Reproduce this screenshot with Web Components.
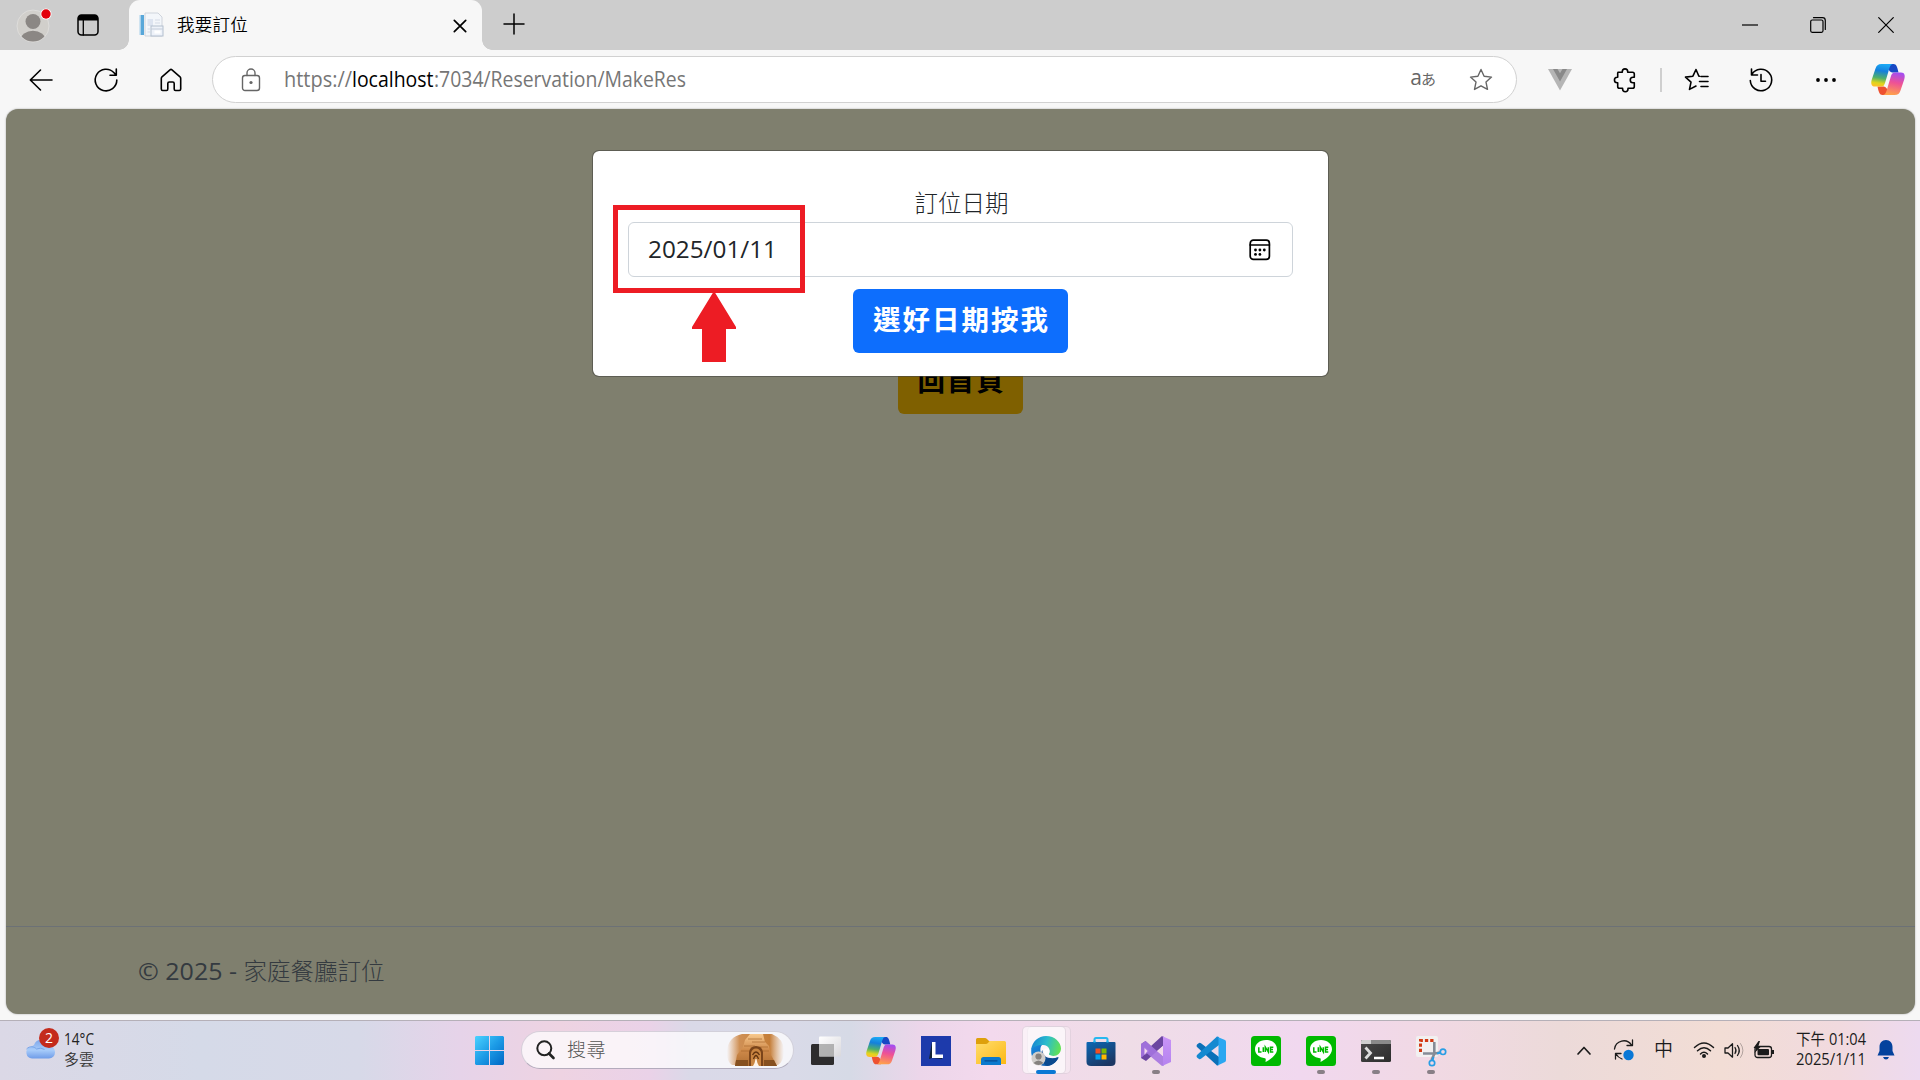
<!DOCTYPE html>
<html lang="zh-Hant">
<head>
<meta charset="utf-8">
<title>我要訂位</title>
<style>
html,body{margin:0;height:100%;overflow:hidden;background:#f7f7f7}
body{font-family:"Open Sans","Noto Sans CJK TC",sans-serif;color:#000}
</style>
</head>
<body>
<desktop-screen></desktop-screen>
<script>
const S = 'fill="none" stroke="currentColor" stroke-linecap="round" stroke-linejoin="round"';
const COPILOT = `<defs><linearGradient id="a" x1=".5" y1="0" x2=".35" y2="1"><stop offset="0" stop-color="#1ba9f5"/><stop offset=".3" stop-color="#1480dc"/><stop offset=".62" stop-color="#4fb06a"/><stop offset=".85" stop-color="#e0d51c"/><stop offset="1" stop-color="#ffc02a"/></linearGradient>
<linearGradient id="b" x1=".6" y1="0" x2=".4" y2="1"><stop offset="0" stop-color="#a44df0"/><stop offset=".45" stop-color="#ee5196"/><stop offset="1" stop-color="#ffa24a"/></linearGradient></defs>
<path fill="#1748c4" d="M17 0H22.5C25.5 0 26.3 3 27.5 8.5H22C19 8.5 18 6 17 5Z"/>
<path fill="#ee5130" d="M17 31H11.5C8.5 31 7.7 28 6.5 22.5H12C15 22.5 16 25 17 26Z"/>
<path fill="url(#a)" d="M10.500 0H22C19.300 0 18.400 4 17.300 8L14 19C13 22 12 22.600 9.500 22.600H4C0 22.600-.3 19 .8 15.500L4.500 4.500C5.500 1.500 7 0 10.500 0Z"/>
<path fill="url(#b)" d="M23.500 31H12C14.700 31 15.600 27 16.700 23L20 12C21 9 22 8.400 24.500 8.400H30C34 8.400 34.300 12 33.200 15.500L29.500 26.500C28.500 29.500 27 31 23.500 31Z"/>`;
const LINE = `<rect width="30" height="30" rx="3.500" fill="#00b900"/><path fill="#fff" d="M15 4C8.500 4 4 8 4 13.200C4 18 8 21.500 14 22.200C15 22.400 14.800 23.500 14.500 26C19 23.500 26 19 26 13.200C26 8 21.500 4 15 4Z"/><path d="M7.800 11.200V16H10.500M12.300 11.200V16M14.300 16V11.200L17.300 16V11.200M22.300 11.200H19.500V16H22.300M19.500 13.600H22" fill="none" stroke="#00b900" stroke-width="1.500"/>`;
const STAR = 'M12 1.500L15.100 8.200L22.500 9.100L17 14.100L18.500 21.400L12 17.800L5.500 21.400L7 14.100L1.500 9.100L8.900 8.200Z';
const ICONS = {
avatar:[36,36,`<circle cx="18" cy="19" r="16" fill="#d1cfcb" stroke="#dedddb"/><clipPath id="c"><circle cx="18" cy="19" r="15.500"/></clipPath><g fill="#8b8784" clip-path="url(#c)"><circle cx="18" cy="14.500" r="7.500"/><ellipse cx="18" cy="33" rx="12.500" ry="9.300"/></g><circle cx="31" cy="7" r="5.500" fill="#fff"/><circle cx="31" cy="7" r="4.700" fill="#e3000b"/>`],
workspace:[22,22,`<rect x="1" y="1" width="20" height="20" rx="3.500" ${S} stroke-width="1.500"/><path d="M1 6.500V4.500A3.500 3.500 0 0 1 4.500 1H17.500A3.500 3.500 0 0 1 21 4.500V6.500Z"/><path d="M6.300 6V21" ${S} stroke-width="1.300"/>`],
favicon:[26,26,`<path d="M7 1H20L24 5V24H7Z" fill="#f3f6fa" stroke="#cfd4dc"/><rect x="2" y="3" width="4" height="20" fill="#58a7d9"/><rect x="1.500" y="3" width="1.500" height="20" fill="#a9d1ec"/><path d="M9.500 7H15V14H9.500Z" fill="#dde4f0"/><path d="M17 8H22M17 11H22M9.500 17H12M9.500 20H12" stroke="#d5dbe6"/><rect x="13" y="14" width="12" height="10" fill="#eef2f9" stroke="#b3bfce"/><path d="M13 17H25" stroke="#c3ccd9"/><rect x="16.500" y="18.500" width="6" height="3" fill="#fff"/>`],
x:[14,14,`<path d="M1.300 1.300L12.700 12.700M12.700 1.300L1.300 12.700" ${S} stroke-width="1.700"/>`],
winx:[16,16,`<path d="M.7 .7L15.300 15.300M15.300 .7L.7 15.300" ${S} stroke-width="1.200"/>`],
plus:[22,22,`<path d="M11 1V21M1 11H21" ${S} stroke-width="1.500"/>`],
min:[16,2,`<path d="M0 1H16" stroke="#000" stroke-width="1.200"/>`],
restore:[16,16,`<rect x=".7" y="3" width="12.300" height="12.300" rx="1.500" ${S} stroke-width="1.200"/><path d="M3.500 .7H12.500A2.800 2.800 0 0 1 15.300 3.500V12.500" ${S} stroke-width="1.200"/>`],
back:[24,22,`<path d="M23 11H1.500M11.500 1L1.300 11L11.500 21" ${S} stroke-width="1.600"/>`],
reload:[24,24,`<path d="M22.800 12A10.800 10.800 0 1 1 20 4.800L22 7M22.300 1V7.200H16" ${S} stroke-width="1.600"/>`],
home:[22,24,`<path d="M1.300 10.500Q1.300 9.500 2 8.800L10 1.800Q11 1 12 1.800L20 8.800Q20.700 9.500 20.700 10.500V21Q20.700 22.500 19.300 22.500H15.500Q14.200 22.500 14.200 21V15.500Q14.200 14 12.700 14H9.300Q7.800 14 7.800 15.500V21Q7.800 22.500 6.500 22.500H2.700Q1.300 22.500 1.300 21Z" ${S} stroke-width="1.600"/>`],
lock:[20,24,`<g color="#666"><rect x="1.500" y="7.500" width="17" height="15" rx="2.500" ${S} stroke-width="1.400"/><path d="M6 7.500V5A4 4 0 0 1 14 5V7.500" ${S} stroke-width="1.400"/><circle cx="10" cy="14.500" r="1.600" fill="#666"/></g>`],
star:[24,24,`<path color="#666" d="${STAR}" ${S} stroke-width="1.400"/>`],
vue:[24,22,`<path d="M0 0H24L12 21.500Z" fill="#b5b5b5"/><path d="M5 0H9.500L12 4.300L14.500 0H19L12 12.500Z" fill="#898989"/>`],
puzzle:[22,24,`<path d="M4 4.200H8.300V3.600A2.700 2.700 0 0 1 13.700 3.600V4.200H18.500Q20.300 4.200 20.300 6V9.300H19A2.700 2.700 0 0 0 19 14.800H20.300V18.500Q20.300 20.300 18.500 20.300H14V21A2.700 2.700 0 0 1 8.600 21V20.300H5.500Q3.700 20.300 3.700 18.500V14.800H3.200A2.700 2.700 0 0 1 3.200 9.300H3.700V5Q3.700 4.200 4.500 4.200Z" ${S} stroke-width="1.600"/>`],
favs:[26,24,`<path d="M15.500 8.200L14.900 8.200L12 1.500L8.900 8.200L1.500 9.100L7 14.100L5.500 21.400L12 18M17 8.500H24M15.500 13.500H24M17 18.500H24" ${S} stroke-width="1.600"/>`],
history:[24,24,`<path d="M2.500 1V7H8.500M2.800 6.500A10.700 10.700 0 1 1 1.300 12.500M12 6.500V13.300H16.500" ${S} stroke-width="1.600"/>`],
dots:[22,6,`<circle cx="3" cy="3" r="1.900"/><circle cx="11" cy="3" r="1.900"/><circle cx="19" cy="3" r="1.900"/>`],
copilot:[34,31,COPILOT],
copilotSmall:[30,27.4,COPILOT,'0 0 34 31'],
calendar:[22,22,`<rect x="1.200" y="1.200" width="19.200" height="19.200" rx="3.200" ${S} stroke-width="1.700"/><path d="M1 6H20.500" ${S} stroke-width="1.500"/><g><circle cx="6.500" cy="11" r="1.400"/><circle cx="10.900" cy="11" r="1.400"/><circle cx="15.300" cy="11" r="1.400"/><circle cx="6.500" cy="15.400" r="1.400"/><circle cx="10.900" cy="15.400" r="1.400"/></g>`],
arrow:[44,71,`<path fill="#ed1c24" d="M22 0L44 36V38H34V71H10V38H0V36Z"/>`],
cloud:[30,20,`<defs><linearGradient id="a" x1="0" y1="0" x2="0" y2="1"><stop offset="0" stop-color="#7da6ea"/><stop offset=".55" stop-color="#a8ccfa"/><stop offset="1" stop-color="#6f9ce8"/></linearGradient></defs><path fill="url(#a)" d="M7 19.500A6 6 0 0 1 5 8C7 7 8 7 9 6C11 -1 21 -1 23 6C27 7 30 9 30 13.500A6 6 0 0 1 24 19.500Z"/><path d="M1.500 10C5 6.500 9 7.500 11.500 10Q16 8 19.500 10.500" stroke="#78a4e8" fill="none"/>`],
win:[29,29,`<defs><linearGradient id="a" gradientUnits="userSpaceOnUse" x1="0" y1="0" x2="29" y2="29"><stop offset="0" stop-color="#4bd2ff"/><stop offset=".5" stop-color="#1c9be6"/><stop offset="1" stop-color="#0067c5"/></linearGradient></defs><path fill="url(#a)" d="M1 0H14V14H0V1ZM15 0H28L29 1V14H15ZM0 15H14V29H1L0 28ZM15 15H29V28L28 29H15Z"/>`],
search:[19,20,`<circle cx="8.300" cy="8.300" r="7" fill="none" stroke="#222" stroke-width="2"/><path d="M13 13.500L17.500 18" stroke="#222" stroke-width="2.600" stroke-linecap="round"/>`],
canyon:[60,34,`<defs><linearGradient id="a"><stop offset="0" stop-color="#d9975a" stop-opacity="0"/><stop offset=".22" stop-color="#cf9055"/><stop offset=".75" stop-color="#c47d38"/><stop offset="1" stop-color="#dba067" stop-opacity="0"/></linearGradient><linearGradient id="b" x1="0" y1="0" x2="0" y2="1"><stop offset="0" stop-color="#f8c98e"/><stop offset=".5" stop-color="#cf8a4a"/><stop offset="1" stop-color="#b06f33"/></linearGradient></defs><path fill="url(#a)" d="M16 1H46Q58 6 58 18Q58 28 52 32H6Q0 28 1 18Q2 4 16 1Z"/><path fill="url(#b)" d="M24 1H37L39 9L43 13L45 22L51 33H36Q36 26 33 24Q28 21 25 33H9L11 22L17 14L19 7Z"/><path d="M22 6H36M26 9H39M18 13H29M33 14H42M15 18H25M35 18H43" stroke="#a5652b" stroke-width="1" opacity=".65"/><path d="M10 27H22V33H9ZM38 27H48L51 33H38Z" fill="#86501f"/><path fill="#7a441a" d="M23 33V19Q24 13 30 13Q36 13 37 19V33Z"/><path fill="#c98541" d="M25 33V20Q26 15.500 30 15.500Q34 15.500 35 20V33Z"/><path d="M26.500 22Q30 16 33.500 22M27.500 26Q30 19 32.500 26" fill="none" stroke="#633510" stroke-width="1.300"/><path fill="#fff3e4" d="M27 33Q29 30 29.500 26H30.500Q31 30 33 33Z"/>`],
task:[30,29,`<defs><linearGradient id="a" x1="0" y1="0" x2="1" y2="1"><stop offset="0" stop-color="#fff"/><stop offset="1" stop-color="#d9d8dc"/></linearGradient></defs><rect y="8" width="23" height="21" rx="1.500" fill="#2d2c2d"/><rect x="8" y="0.500" width="22" height="20" rx="1" fill="url(#a)"/><path d="M8 8H23V20.500H8Z" fill="#a3a3a3" opacity=".8"/>`],
L:[30,30,`<rect width="30" height="30" fill="#1d3aab"/><path d="M11 6L8 23L11 22L21 23V20H14V6Z" fill="#123"/><path d="M11 6H14.500V18.500H22V22H11Z" fill="#fff"/>`],
folder:[30,28,`<defs><linearGradient id="a" x1="0" y1="0" x2="1" y2="1"><stop offset="0" stop-color="#ffdd6e"/><stop offset="1" stop-color="#fcb813"/></linearGradient></defs><path d="M0 2.500Q0 1 1.500 1H9Q10 1 11 2L13 4H28V10H0Z" fill="#dea00b"/><path d="M0 7H10Q11 7 12 6L13.500 4H28.500Q30 4 30 5.500V27H0Z" fill="url(#a)"/><path d="M5 28V22.500Q5 20 7.500 20H22.500Q25 20 25 22.500V28Z" fill="#0b79cd"/><path d="M9 23.800H21" stroke="#064c94" stroke-width="1.300" stroke-linecap="round"/>`],
edge:[30,30,`<defs><linearGradient id="a" x1="0" y1=".3" x2="1" y2=".5"><stop offset="0" stop-color="#1683d1"/><stop offset=".5" stop-color="#2bbccd"/><stop offset="1" stop-color="#62e254"/></linearGradient><linearGradient id="b" x1="0" y1="0" x2="1" y2="1"><stop offset="0" stop-color="#1a8be0"/><stop offset="1" stop-color="#0c4fa0"/></linearGradient></defs><path fill="url(#b)" d="M.2 14C1 9 7 7 11 9C8 12 9 20 15 22C20 24 24 22 27.500 21C25 27 20 30 15 30C6 30-.5 23 .2 14Z"/><path fill="#0b4a8f" d="M11.500 14C11 20 17 24 27.700 21.500C25 27 21 29.500 16 29.900C10 27 8 19 11.500 14Z"/><path fill="url(#a)" d="M.1 14C1 5.500 7.500 0 15 0C24 0 30 6.500 30 12.500C30 17 26.500 20 22.500 20C19.500 20 17.500 19 17.800 17.700C20 15 18 9 12 9C6.500 9 1.500 11 .1 14Z"/><path d="M12.500 14.500C14 11.500 18 12 18.500 14.500Q18.800 17 17.700 18Q18 19.500 22 20C18 22 13 20 12.500 14.500Z" fill="#fff"/><circle cx="7.500" cy="22.500" r="7" fill="#d1cecb"/><circle cx="7.500" cy="20.500" r="3.100" fill="#85817e"/><path d="M2.500 27Q7.500 22 12.500 27Q7.500 31 2.500 27Z" fill="#85817e"/>`],
store:[30,30,`<defs><linearGradient id="a" x1="0" y1="0" x2=".6" y2="1"><stop offset="0" stop-color="#0b68b5"/><stop offset="1" stop-color="#1c3763"/></linearGradient></defs><path d="M8.500 8V3.500Q8.500 2 10 2H20Q21.500 2 21.500 3.500V8" fill="none" stroke="#27b8ef" stroke-width="2"/><path d="M.5 7Q.5 6 1.500 6H28.500Q29.500 6 29.500 7V26Q29.500 30 25 30H5Q.5 30 .5 26Z" fill="url(#a)"/><path d="M8.500 6.500V5M21.500 6.500V5" stroke="#27b8ef" stroke-width="2"/><path fill="#f25022" d="M9.500 12.500H14.500V17.500H9.500Z"/><path fill="#7fba00" d="M15.500 12.500H20.500V17.500H15.500Z"/><path fill="#00a4ef" d="M9.500 18.500H14.500V23.500H9.500Z"/><path fill="#ffb900" d="M15.500 18.500H20.500V23.500H15.500Z"/>`],
vs:[30,30,`<defs><linearGradient id="a" x1="0" y1="0" x2="0" y2="1"><stop offset="0" stop-color="#c994f7"/><stop offset="1" stop-color="#b583ef"/></linearGradient></defs><path fill="#6b46a0" d="M0 8L4.500 5L10 10L21 0L23 1V9L5 25L0 22Z"/><path fill="#f2daeb" d="M3.500 11L8 15L3.500 19Z"/><path fill="#a574e0" d="M0 8L4.500 5L23 21V29.500L21 30L5.500 17L0 22Z" opacity=".9"/><path fill="#f2daeb" d="M3.500 12L6.500 15L3.500 18.500ZM22 10V20L16 15Z"/><path fill="url(#a)" d="M21 0L30 4V26L21 30Q22 29.500 22 28V2Q22 .5 21 0Z"/>`],
code:[30,30,`<path fill="#0b70b8" d="M1 8.500L3 7Q4 6.500 5 7.300L23 21V29L21 29.500L1 11Q0 10 1 8.500Z"/><path fill="#1589d1" d="M1 21.500L3 23Q4 23.500 5 22.700L23 9V1L21 .5L1 19Q0 20 1 21.500Z"/><path fill="#2aa7f1" d="M20.500 .5L29 4Q30 4.500 30 6V24Q30 25.500 29 26L20.500 30Q22.500 29 22.500 27V3Q22.500 1 20.500 .5Z"/>`],
line:[30,30,LINE],
term:[30,22,`<defs><linearGradient id="a" x1="0" y1="0" x2="1" y2="1"><stop offset="0" stop-color="#4a4a4a"/><stop offset="1" stop-color="#2c2c2c"/></linearGradient></defs><rect width="30" height="22" rx="1.500" fill="url(#a)"/><path d="M0 4V1.500Q0 0 1.500 0H28.500Q30 0 30 1.500V4Z" fill="#8a8a8a"/><path d="M0 4V1.500Q0 0 1.500 0H10V4Z" fill="#cfcfcf"/><path d="M4.500 7.500L9.500 13L4.500 18.500" fill="none" stroke="#ddd" stroke-width="2.800"/><path d="M13 18H23" stroke="#fff" stroke-width="2.500"/>`],
snip:[30,30,`<rect width="22" height="21" rx="2" fill="#f2f0f0"/><path d="M4.500 16V4.500H18" fill="none" stroke="#d33a13" stroke-width="3" stroke-dasharray="3.300 2"/><path d="M18.300 6V18L15.500 24M7 17.500H19L24 16.500" fill="none" stroke="#858c96" stroke-width="2.600"/><circle cx="27" cy="15.800" r="2.700" fill="none" stroke="#299ee5" stroke-width="1.700"/><circle cx="16" cy="27" r="2.700" fill="none" stroke="#299ee5" stroke-width="1.700"/><path d="M21 17.500L24.500 16.500M17.500 21L16.500 24.500" stroke="#299ee5" stroke-width="2"/>`],
chev:[14,9,`<path d="M1 8L7 1.500L13 8" ${S} stroke-width="1.700"/>`],
sync:[22,22,`<path d="M1.500 10A9.300 9.300 0 0 1 18.500 6M19.500 1V6.500H14M2.500 20V14.500H8M3 15Q5 18.500 9 20" ${S} stroke-width="1.300"/><circle cx="15.500" cy="16" r="5.200" fill="#0a78d6"/>`],
wifi:[22,16,`<path d="M1.500 5.500Q11-3.500 20.500 5.500M4.500 8.800Q11 2.600 17.500 8.800M7.500 12Q11 8.500 14.500 12" ${S} stroke-width="1.500"/><circle cx="11" cy="14" r="2"/>`],
volume:[20,17,`<path d="M1 6H4L8.500 1.800V15.200L4 11H1Z" ${S} stroke-width="1.300"/><path d="M11 5.500Q13 8.500 11 11.500M13.500 3.500Q17 8.500 13.500 13.500" ${S} stroke-width="1.300"/><path d="M16.500 1.500Q21.500 8.500 16.500 15.500" ${S} stroke-width="1" opacity=".3"/>`],
battery:[21,17,`<rect x="1" y="4.500" width="16.500" height="11" rx="2.500" ${S} stroke-width="1.300"/><rect x="3.500" y="7" width="11.500" height="6.300" rx="1"/><path d="M18 8H20V12H18Z"/><path d="M4.500 -1L-.5 6H2L.5 11L7 4.500H4.300L6 -1Z"/>`],
bell:[18,20,`<path fill="#04429d" d="M9 0C13 0 15.500 3 15.500 7V11L17.500 15.500H.5L2.500 11V7C2.500 3 5 0 9 0Z"/><path fill="#04429d" d="M6 17H12Q11 19.500 9 19.500Q7 19.500 6 17Z"/>`]
};

class Base extends HTMLElement{
  constructor(){super();this.attachShadow({mode:'open'});}
  connectedCallback(){this.shadowRoot.innerHTML=`<style>:host{display:block;box-sizing:border-box}*{box-sizing:border-box}${this.css()}</style>${this.html()}`;}
  css(){return '';}
  html(){return '<slot></slot>';}
}
customElements.define('ui-icon',class extends Base{
  css(){return ':host{display:block;flex:none}svg{display:block;overflow:visible}';}
  html(){const [w,h,body,vb]=ICONS[this.getAttribute('name')];return `<svg width="${w}" height="${h}" viewBox="${vb||`0 0 ${w} ${h}`}" fill="currentColor">${body}</svg>`;}
});
/* One line of text fitted to the width in "w": by letter spacing, or by condensing the glyphs when "squeeze" is set. */
customElements.define('fit-text',class extends Base{
  css(){return ':host{display:block;flex:none;white-space:pre;width:max-content}span{display:inline-block;transform-origin:0 50%}';}
  html(){return '<span><slot></slot></span>';}
  connectedCallback(){super.connectedCallback();
    const want=+this.getAttribute('w'),s=this.shadowRoot.querySelector('span'),n=[...this.textContent].length,natural=s.getBoundingClientRect().width;
    if(this.hasAttribute('squeeze')){s.style.transform=`scaleX(${want/natural})`;this.style.width=want+'px';}
    else s.style.letterSpacing=(want-natural)/n+'px';}
});
customElements.define('browser-tab',class extends Base{
  css(){return `:host{width:353px;height:50px;background:#f7f7f7;border-radius:11px 11px 0 0;display:flex;align-items:center;padding:0 15px 0 9px;position:relative;font-size:17.500px}
  :host::before,:host::after{content:"";position:absolute;bottom:0;width:10px;height:10px}
  :host::before{left:-10px;background:radial-gradient(circle at 0 0,transparent 9.500px,#f7f7f7 10px)}
  :host::after{right:-10px;background:radial-gradient(circle at 100% 0,transparent 9.500px,#f7f7f7 10px)}
  fit-text{margin-left:13px;flex:1;font-weight:350;margin-top:-4px}ui-icon[name=x]{margin-top:2px}`;}
  html(){return `<ui-icon name="favicon"></ui-icon><fit-text w="71">我要訂位</fit-text><ui-icon name="x"></ui-icon>`;}
});
customElements.define('tab-strip',class extends Base{
  css(){return `:host{height:50px;background:#cdcdcd;display:flex;align-items:center;padding:0 26px 0 15px}
  .ws{margin-left:26px}browser-tab{margin-left:30px}.plus{margin-left:21px;margin-top:-2px}.min{margin-left:auto}.r{margin-left:52px}.c{margin-left:52px}`;}
  html(){return `<ui-icon name="avatar"></ui-icon><ui-icon class="ws" name="workspace"></ui-icon><browser-tab></browser-tab><ui-icon class="plus" name="plus"></ui-icon><ui-icon class="min" name="min"></ui-icon><ui-icon class="r" name="restore"></ui-icon><ui-icon class="c" name="winx"></ui-icon>`;}
});
customElements.define('address-bar',class extends Base{
  css(){return `:host{width:1305px;height:47px;border:1.500px solid #d1d1d1;border-radius:24px;background:#fff;display:flex;align-items:center;padding:0 23px 0 28px;font-size:21px;color:#767676}
  .url{display:flex;margin:-1px 0 0 23px;flex:1}.tr{display:flex;align-items:baseline;margin:-6px 33px 0 0;color:#666}.tr small{font-size:15px;margin-left:-1px}`;}
  html(){return `<ui-icon name="lock"></ui-icon><div class="url"><fit-text squeeze w="68">https://</fit-text><fit-text squeeze w="81.500" style="color:#000">localhost</fit-text><fit-text squeeze w="252">:7034/Reservation/MakeRes</fit-text></div><div class="tr">a<small>あ</small></div><ui-icon name="star"></ui-icon>`;}
});
customElements.define('tool-bar',class extends Base{
  css(){return `:host{height:59px;display:flex;align-items:center;padding:0 15px 0 29px}
  address-bar{margin-left:30px}i{width:2px;height:24px;background:#cfcfcf}`;}
  html(){const m=(n,x)=>`<ui-icon name="${n}" style="margin-left:${x}px"></ui-icon>`;
  return m('back',0)+m('reload',41)+m('home',42)+`<address-bar></address-bar>`+m('vue',30.5)+m('puzzle',42.5)+`<i style="margin-left:24px"></i>`+m('favs',22)+m('history',39)+m('dots',42)+m('copilot',34);}
});
customElements.define('solid-button',class extends Base{
  css(){return `:host{display:flex;align-items:center;justify-content:center;height:64px;border-radius:6px;font-weight:700;font-size:27.500px;line-height:1}fit-text{margin:-2px 0 0 2px}`;}
  html(){return `<fit-text w="${this.getAttribute('w')}">${this.getAttribute('label')}</fit-text>`;}
});
customElements.define('date-field',class extends Base{
  css(){return `:host{display:flex;align-items:center;height:55px;border:1px solid #ced4da;border-radius:6px;padding:0 21px 0 18.500px;font-size:24.500px;color:#212529}.d{flex:1;margin-top:-2px}`;}
  html(){return `<div class="d"><fit-text squeeze w="129">2025/01/11</fit-text></div><ui-icon name="calendar" style="color:#000"></ui-icon>`;}
});
customElements.define('booking-dialog',class extends Base{
  css(){return `:host{width:737px;height:227px;background:#fff;background-clip:padding-box;border:1px solid rgba(70,70,65,.6);border-radius:7px;display:flex;flex-direction:column;align-items:center;padding:35px 35px 0;color:#212529;position:relative}
  .lb{height:36px;display:flex;align-items:center;font-size:23.500px;line-height:36px;font-weight:300;padding:0 0 2px 2px}
  date-field{width:665px}solid-button{width:215px;margin-top:12px;background:#0d6efd;color:#fff}
  .mark{position:absolute;left:20px;top:54px;width:192px;height:88px;border:5px solid #ed1c24}
  .arrow{position:absolute;left:99px;top:140px}`;}
  html(){return `<div class="lb"><fit-text w="94">訂位日期</fit-text></div><date-field></date-field><solid-button w="177" label="選好日期按我"></solid-button><div class="mark"></div><ui-icon class="arrow" name="arrow"></ui-icon>`;}
});
customElements.define('web-page',class extends Base{
  css(){return `:host{height:905px;margin:0 5px 0 6px;background:#7f7f6e;border-radius:12px;overflow:hidden;display:flex;flex-direction:column;align-items:center;box-shadow:0 0 2px rgba(0,0,0,.35);padding-top:41px}
  booking-dialog{z-index:1}.home{width:125px;margin-top:-27px;background:#7f6000;color:#000}
  footer{margin-top:auto;width:100%;height:88px;border-top:1px solid #6c7176;display:flex;align-items:center;padding:0 0 1px 132px;color:#343a40;font-size:24.500px}
  .cj{font-size:23.500px;font-weight:300}`;}
  html(){return `<booking-dialog></booking-dialog><solid-button class="home" w="88" label="回首頁"></solid-button><footer><fit-text squeeze w="105.500">© 2025 - </fit-text><fit-text class="cj" w="141">家庭餐廳訂位</fit-text></footer>`;}
});
customElements.define('task-app',class extends Base{
  css(){return `:host{width:55px;height:59px;flex:none;display:flex;align-items:center;justify-content:center;position:relative}
  .hl{position:absolute;left:4px;top:5px;width:44px;height:48px;border-radius:5px;background:rgba(255,255,255,.6);border:1px solid rgba(120,90,120,.18)}
  .hl2{position:absolute;left:9px;top:5px;width:44px;height:48px;border-radius:5px;background:rgba(255,255,255,.3);border:1px solid rgba(120,90,120,.14)}
  .dot,.bar{position:absolute;top:49px;height:4px;border-radius:2px;left:23.500px;width:8px;background:#887f86}.bar{left:18px;width:20px;background:#0a78d4}ui-icon{position:relative}`;}
  html(){const s=this.getAttribute('state');return (s=='active'?'<div class="hl2"></div><div class="hl"></div>':'')+`<ui-icon name="${this.getAttribute('icon')}"></ui-icon>`+(s=='open'?'<div class="dot"></div>':s=='active'?'<div class="bar"></div>':'');}
});
customElements.define('weather-widget',class extends Base{
  css(){return `:host{display:flex;width:450px;padding-left:25px;font-size:15.500px;line-height:20px;color:#222}
  .ic{position:relative;width:30px;height:39px;padding-top:18px}.n{position:absolute;left:14px;top:7px;width:20px;height:20px;border-radius:50%;background:#c42b1c;color:#fff;text-align:center;font-size:14px;line-height:20px}
  .t{margin:8px 0 0 9px}`;}
  html(){return `<div class="ic"><ui-icon name="cloud"></ui-icon><div class="n">2</div></div><div class="t"><fit-text squeeze w="30">14°C</fit-text><fit-text w="30" style="color:#333;font-size:15px;font-weight:350">多雲</fit-text></div>`;}
});
customElements.define('search-box',class extends Base{
  css(){return `:host{width:273px;height:38px;border-radius:19px;background:rgba(255,255,255,.72);border:1px solid rgba(110,100,130,.25);border-bottom-color:rgba(110,100,130,.5);display:flex;align-items:center;padding:0 7px 0 14px;font-size:19px;color:#555}fit-text{margin-left:12px;flex:1;font-weight:300;line-height:1}`;}
  html(){return `<ui-icon name="search"></ui-icon><fit-text w="39">搜尋</fit-text><ui-icon name="canyon"></ui-icon>`;}
});
customElements.define('system-tray',class extends Base{
  css(){return `:host{margin-left:auto;display:flex;align-items:center;height:59px;padding-bottom:1px;color:#1b1b1b}
  .zh{font-size:19px;line-height:1;font-weight:350;margin:-2px 0 0 19px}.clock{font-size:15.500px;line-height:20px;margin-left:21px;margin-top:-2px}.clock fit-text{margin-left:auto}`;}
  html(){const m=(n,x)=>`<ui-icon name="${n}" style="margin-left:${x}px"></ui-icon>`;
  return m('chev',0)+m('sync',22)+`<span class="zh">中</span>`+m('wifi',20)+m('volume',9)+m('battery',10)+`<div class="clock"><fit-text squeeze w="70">下午 01:04</fit-text><fit-text squeeze w="70">2025/1/11</fit-text></div>`+m('bell',11);}
});
customElements.define('task-bar',class extends Base{
  css(){return `:host{height:60px;border-top:1px solid #b5b0b8;display:flex;align-items:center;padding-right:26px;background:linear-gradient(90deg,#dbd8e6 0,#d5dae8 200px,#d7d9e8 360px,#e6d3e9 460px,#eed3e2 560px,#ead2e8 650px,#dad9e8 690px,#d9dae8 790px,#d6dae6 850px,#ecd6ea 920px,#f3d9ed 990px,#efdde7 1130px,#f1d8ef 1300px,#f1d9e4 1430px,#ecdad9 1560px,#f2ddd5 1720px,#f1dadf 1840px,#eddaf0 1920px)}
  weather-widget{align-self:flex-start}.win{margin:0 18px 0 25px}search-box{margin:-1px 0 0 -1px}.apps{display:flex;margin-left:4px}system-tray{position:relative;left:1px}`;}
  html(){const a=[['task'],['copilotSmall'],['L'],['folder'],['edge','active'],['store'],['vs','open'],['code'],['line'],['line','open'],['term','open'],['snip','open']];
  return `<weather-widget></weather-widget><ui-icon class="win" name="win"></ui-icon><search-box></search-box><div class="apps">${a.map(([i,s])=>`<task-app icon="${i}" state="${s||''}"></task-app>`).join('')}</div><system-tray></system-tray>`;}
});
customElements.define('desktop-screen',class extends Base{
  css(){return `:host{width:1920px;height:1080px;background:#f7f7f7;display:flex;flex-direction:column}task-bar{margin-top:auto}`;}
  html(){return `<tab-strip></tab-strip><tool-bar></tool-bar><web-page></web-page><task-bar></task-bar>`;}
});
</script>
</body>
</html>
